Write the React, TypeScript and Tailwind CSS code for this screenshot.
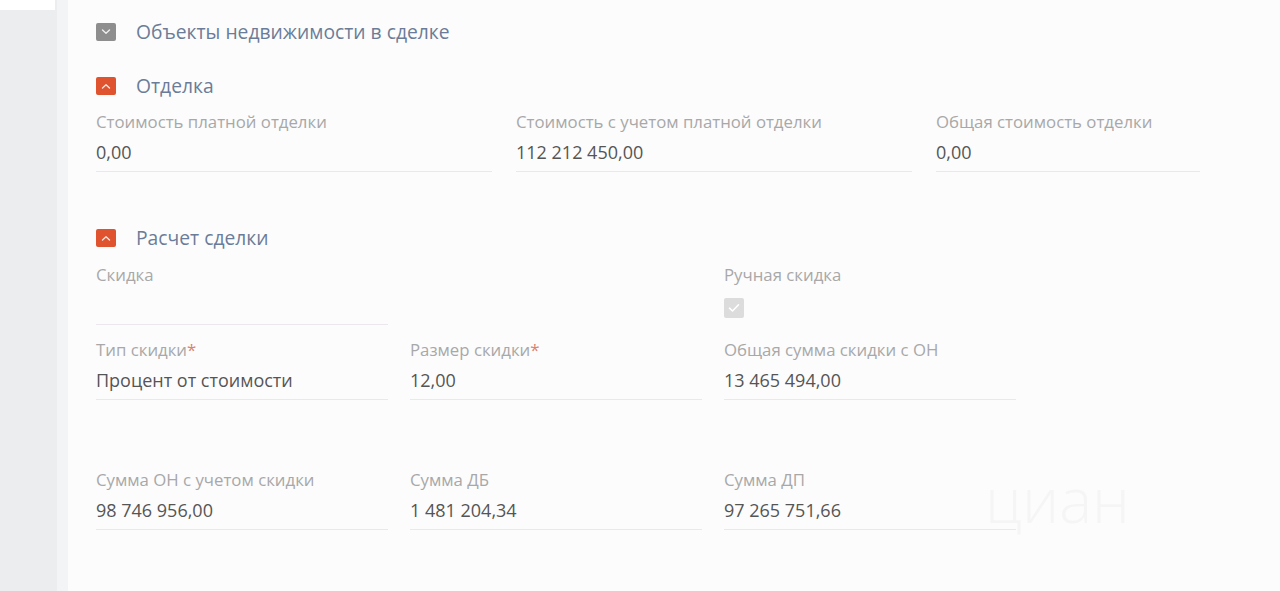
import React from 'react';

const Chevron = ({ up }: { up?: boolean }) => (
  <svg width="10" height="6" viewBox="0 0 10 6" fill="none">
    <path
      d={up ? 'M1.5 5L5 1.8 8.5 5' : 'M1.5 1L5 4.2 8.5 1'}
      stroke="#fff"
      strokeWidth="1.4"
      strokeLinecap="round"
      strokeLinejoin="round"
      opacity="0.85"
    />
  </svg>
);

const SectionHeader = ({ title, open, className }: { title: string; open?: boolean; className?: string }) => (
  <div className={`flex h-[18px] items-center ${className ?? ''}`}>
    <div
      className={`flex h-[18px] w-[20px] items-center justify-center rounded-[2px] ${
        open ? 'bg-[#e0532f]' : 'bg-[#8e8e8e]'
      }`}
    >
      <Chevron up={open} />
    </div>
    <span className="ml-[20px] text-[19.3px] leading-none text-[#6b7c98]">{title}</span>
  </div>
);

const Field = ({
  label,
  value,
  required,
  className,
}: {
  label: string;
  value?: string;
  required?: boolean;
  className?: string;
}) => (
  <div className={`border-b border-[#ece7ee] pb-[7px] ${className ?? ''}`}>
    <div className="h-[20px] text-[16.8px] leading-[20px] text-[#a8a8a8]">
      {label}
      {required && <span className="text-[#d9836f]">*</span>}
    </div>
    <div className="mt-[8px] h-[24px] text-[18px] leading-[24px] text-[#555555]">{value}</div>
  </div>
);

const App = () => {
  return (
    <div className="relative flex h-[591px] w-[1280px] overflow-hidden font-['Open_Sans',sans-serif]">
      <aside className="w-[57px] bg-[#ebedef]">
        <div className="h-[10px] w-[55px] bg-white" />
      </aside>
      <div className="w-[11px] bg-[#f3f4f5]" />
      <main className="flex-1 bg-[#fcfcfd] pl-[28px] pt-[23px]">
        <SectionHeader title="Объекты недвижимости в сделке" />
        <SectionHeader title="Отделка" open className="mt-[36px]" />
        <div className="mt-[17px] flex gap-[24px]">
          <Field className="w-[396px]" label="Стоимость платной отделки" value="0,00" />
          <Field className="w-[396px]" label="Стоимость с учетом платной отделки" value="112 212 450,00" />
          <Field className="w-[264px]" label="Общая стоимость отделки" value="0,00" />
        </div>

        <SectionHeader title="Расчет сделки" open className="mt-[57px]" />
        <div className="mt-[18px] flex gap-[22px]">
          <Field className="w-[292px]" label="Скидка" />
          <div className="w-[292px]" />
          <div className="w-[292px]">
            <div className="h-[20px] text-[16.8px] leading-[20px] text-[#a8a8a8]">Ручная скидка</div>
            <div className="mt-[13px] flex h-[20px] w-[20px] items-center justify-center rounded-[2px] bg-[#dcdcdc]">
              <svg width="12" height="10" viewBox="0 0 12 10" fill="none">
                <path d="M1.5 5.2L4.5 8 10.5 1.8" stroke="#fff" strokeWidth="1.6" strokeLinecap="round" strokeLinejoin="round" />
              </svg>
            </div>
          </div>
        </div>
        <div className="mt-[15px] flex gap-[22px]">
          <Field className="w-[292px]" label="Тип скидки" required value="Процент от стоимости" />
          <Field className="w-[292px]" label="Размер скидки" required value="12,00" />
          <Field className="w-[292px]" label="Общая сумма скидки с ОН" value="13 465 494,00" />
        </div>
        <div className="mt-[70px] flex gap-[22px]">
          <Field className="w-[292px]" label="Сумма ОН с учетом скидки" value="98 746 956,00" />
          <Field className="w-[292px]" label="Сумма ДБ" value="1 481 204,34" />
          <Field className="w-[292px]" label="Сумма ДП" value="97 265 751,66" />
        </div>
      </main>
      <div className="pointer-events-none absolute left-[985px] top-[468px] select-none text-[62px] font-light leading-none text-[#f5f5f6]">
        циан
      </div>
    </div>
  );
};

export default App;
